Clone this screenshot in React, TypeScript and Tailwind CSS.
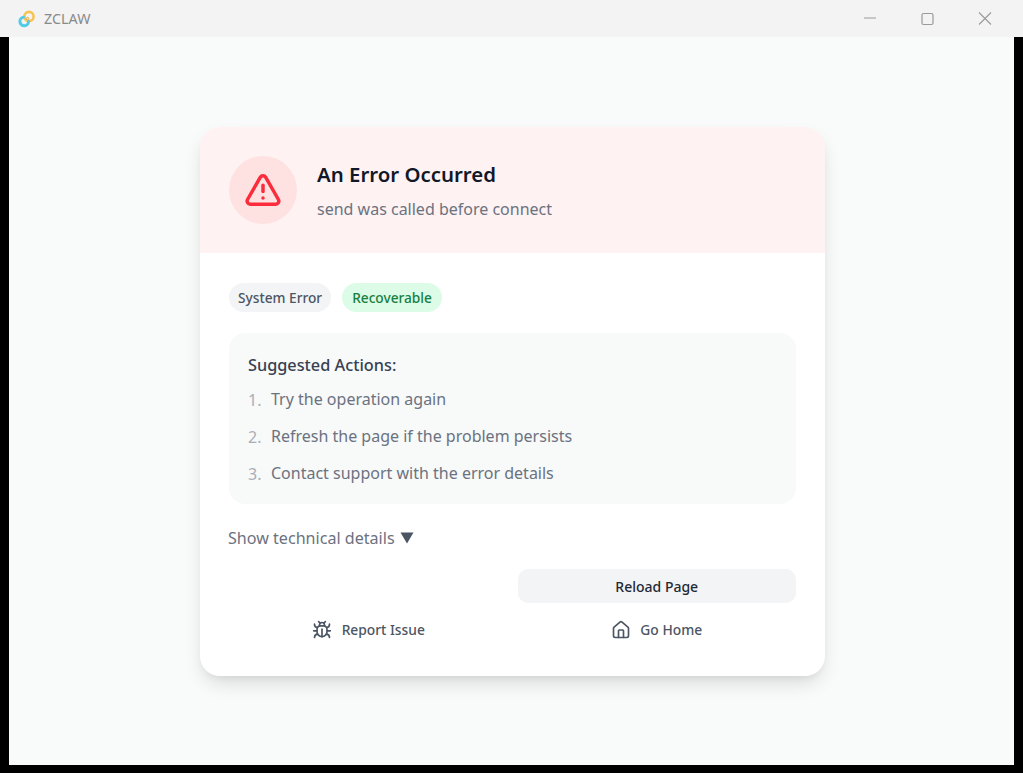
import { Bug, House, TriangleAlert } from "lucide-react";

const STEPS = [
  "Try the operation again",
  "Refresh the page if the problem persists",
  "Contact support with the error details",
];

function Logo() {
  return (
    <svg width="18" height="18" viewBox="0 0 18 18" fill="none">
      <circle cx="11" cy="6.500" r="4.600" stroke="#f6c453" strokeWidth="2.600" />
      <path d="M10.500 11.500a4.300 4.300 0 1 1-5-4.200" stroke="#53cbe6" strokeWidth="3" strokeLinecap="round" />
      <circle cx="9.500" cy="8.500" r="1.200" stroke="#f2a33a" strokeWidth="1" />
    </svg>
  );
}

function TitleBar() {
  return (
    <div className="flex h-[37px] shrink-0 items-center justify-between bg-[#f3f3f3]">
      <div className="flex items-center gap-[8px] pl-[18px] text-[14.300px] text-[#8a8a8a]">
        <Logo />
        <span>ZCLAW</span>
      </div>
      <div className="flex items-center">
        <svg width="57" height="37" viewBox="0 0 57 37" className="text-[#9a9a9a]" fill="none" stroke="currentColor">
          <path d="M22 18h12" strokeWidth="1" />
        </svg>
        <svg width="57" height="37" viewBox="0 0 57 37" className="text-[#9a9a9a]" fill="none" stroke="currentColor">
          <rect x="23" y="13.500" width="11" height="11" rx="1.500" strokeWidth="1.200" />
        </svg>
        <svg width="67" height="37" viewBox="0 0 67 37" className="text-[#9a9a9a]" fill="none" stroke="currentColor">
          <path d="M23 12.500l12 12M35 12.500l-12 12" strokeWidth="1.100" />
        </svg>
      </div>
    </div>
  );
}

export default function App() {
  return (
    <div className="flex h-[773px] flex-col overflow-hidden bg-black font-['Noto_Sans','Open_Sans',sans-serif]">
      <TitleBar />
      <div className="mx-[9px] mb-2 flex flex-1 items-center justify-center bg-[#f9fafa] pt-px pl-[2px]">
        <div className="w-[625px] overflow-hidden rounded-[20px] bg-white shadow-[0_10px_20px_-4px_rgba(0,0,0,0.14),0_4px_8px_-4px_rgba(0,0,0,0.08)]">
          <div className="flex h-[126px] items-center gap-[20px] bg-[#fef2f2] pl-[29px]">
            <div className="flex size-[68px] items-center justify-center rounded-full bg-[#fee2e2]">
              <TriangleAlert className="size-[38px] text-[#fb2c3c]" strokeWidth={2.200} />
            </div>
            <div>
              <div className="text-[20.400px] leading-[28px] font-semibold text-[#111827]">An Error Occurred</div>
              <div className="mt-[11px] text-[16px] leading-[21px] text-[#6b7280]">send was called before connect</div>
            </div>
          </div>

          <div className="px-[29px] pt-[30px] pb-[29px]">
            <div className="flex gap-[11px]">
              <span className="flex h-[29px] items-center rounded-full bg-[#f3f4f6] px-[9px] pt-px text-[13.700px] font-medium text-[#4b5563]">System Error</span>
              <span className="flex h-[29px] items-center rounded-full bg-[#dcfce7] px-[10px] pt-px text-[13.700px] font-medium text-[#16803f]">Recoverable</span>
            </div>

            <div className="mt-[21px] h-[171px] rounded-[16px] bg-[#f8f9f9] px-[19px] pt-[21px]">
              <div className="text-[16.300px] leading-[22px] font-medium text-[#374151]">Suggested Actions:</div>
              <ol className="mt-[4px] flex flex-col">
                {STEPS.map((s, i) => (
                  <li key={s} className="flex h-[37px] items-center gap-[10px] text-[16px] text-[#6b7280]">
                    <span className="w-[13px] pt-[3px] text-[#a9afb8]">{i + 1}.</span>
                    <span>{s}</span>
                  </li>
                ))}
              </ol>
            </div>

            <div className="mt-[22px] -ml-px flex h-[24px] items-center gap-[5px] text-[16.100px] text-[#6b7280]">
              <span>Show technical details</span>
              <svg width="14" height="12" viewBox="0 0 14 12" className="text-[#4b5563]">
                <path d="M0.500 0.500h13L7 11.500z" fill="currentColor" />
              </svg>
            </div>

            <div className="mt-[19px] grid grid-cols-2 gap-x-[10px]">
              <div />
              <button className="h-[34px] rounded-[10px] bg-[#f3f4f6] text-[14px] font-medium text-[#1f2937]">Reload Page</button>
            </div>
            <div className="mt-[10px] grid grid-cols-2 gap-x-[10px]">
              <button className="flex h-[34px] items-center justify-center gap-[10px] text-[13.800px] font-medium text-[#4b5563]">
                <Bug className="size-[20px]" strokeWidth={2} />
                Report Issue
              </button>
              <button className="flex h-[34px] items-center justify-center gap-[9px] text-[13.800px] font-medium text-[#4b5563]">
                <House className="size-[20px]" strokeWidth={2} />
                Go Home
              </button>
            </div>
          </div>
        </div>
      </div>
    </div>
  );
}
